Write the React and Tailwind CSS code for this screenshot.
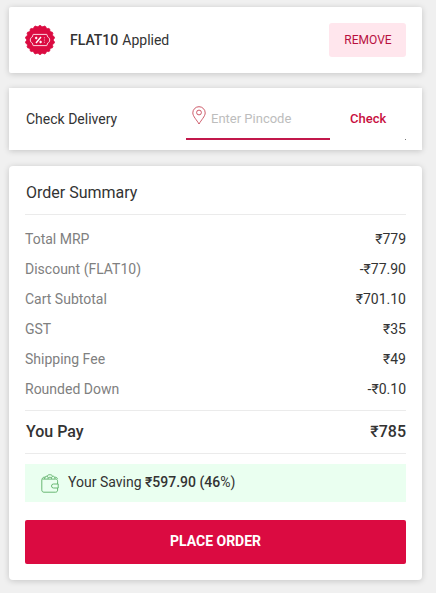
const rows = [
  ["Total MRP", "₹779"],
  ["Discount (FLAT10)", "-₹77.90"],
  ["Cart Subtotal", "₹701.10"],
  ["GST", "₹35"],
  ["Shipping Fee", "₹49"],
  ["Rounded Down", "-₹0.10"],
];

function CouponIcon() {
  const teeth = 18;
  const points = [];
  for (let i = 0; i < teeth * 4; i++) {
    const r = i % 4 < 2 ? 14.6 : 13.5;
    const a = ((i - 0.5) / (teeth * 4)) * Math.PI * 2 - Math.PI / 2;
    points.push(`${(15 + r * Math.cos(a)).toFixed(2)},${(15 + r * Math.sin(a)).toFixed(2)}`);
  }
  return (
    <svg className="h-[30px] w-[30px] shrink-0" viewBox="0 0 30 30" fill="none">
      <polygon points={points.join(" ")} fill="#db0b41" stroke="#db0b41" strokeWidth="0.8" strokeLinejoin="round" />
      <path
        d="M8.2 9.4h13.6l.9 2.5c1.3.5 2 1.700 2 3.100s-.7 2.600-2 3.100l-.9 2.500H8.200l-.9-2.500c-1.300-.5-2-1.700-2-3.100s.7-2.600 2-3.100z"
        stroke="#fbd3df"
        strokeWidth="1"
      />
      <path d="M16 12l-5 6" stroke="#fff" strokeWidth="1.4" />
      <circle cx="11.2" cy="13" r="0.9" fill="#fff" stroke="#fff" strokeWidth="0.7" />
      <circle cx="15.6" cy="17" r="0.9" fill="#fff" stroke="#fff" strokeWidth="0.7" />
      <path d="M19.4 12v6" stroke="#f28cab" strokeWidth="0.9" strokeDasharray="1.5 0.8" />
    </svg>
  );
}

function PinIcon() {
  return (
    <svg className="-mt-[3px] h-[19px] w-[14px] shrink-0" viewBox="0 0 14 19" fill="none" stroke="#c43d4f" strokeWidth="0.85">
      <path d="M7 18C5 14.3.8 10.3.8 6.9a6.2 6.2 0 0 1 12.4 0C13.2 10.3 9 14.3 7 18z" />
      <circle cx="7" cy="6.5" r="2.4" />
    </svg>
  );
}

function WalletIcon() {
  return (
    <svg className="h-[19px] w-[18px] shrink-0" viewBox="0 0 18 19" fill="none" stroke="#62b36d" strokeWidth="0.95">
      <path d="M16.6 10V7.2c0-1.3-.8-2.1-2.1-2.1H3C1.6 5.1.8 4.5.8 5.9v10c0 1.5.8 2.3 2.2 2.3h11.5c1.3 0 2.1-.8 2.1-2.1V14" />
      <path d="M17.2 10h-4.7a2 2 0 0 0 0 4h4.7z" />
      <path d="M1.2 4.9c.2-1.2 1-1.7 2.2-1.7h1M13.5 3.2h.8c1.3 0 2 .7 2.2 2M3.6 5c.1-2 1-3 2.6-2.8C6.6 1.1 7.5.7 8.8.7s2.3.4 2.7 1.5c1.6-.2 2.500.9 2.600 2.800" />
      <path d="M7 5c0-1 .7-1.7 1.8-1.7s1.8.7 1.8 1.7M6.2 2.2l1.1 1.7M11.5 2.2l-1.2 1.7" />
    </svg>
  );
}

const card = "bg-white shadow-[0_1px_6px_rgba(0,0,0,0.18)]";

export default function App() {
  return (
    <main className="flex h-[593px] w-[436px] flex-col bg-[#f0f0f0] pr-[14px] pl-[9px] pt-[7px] font-[Roboto,sans-serif] text-[14px] text-[#333]">
      <section className={`flex h-[66px] shrink-0 items-center rounded-[2px] px-4 ${card}`}>
        <CouponIcon />
        <p className="ml-[15px] leading-5">
          <span className="mr-1 font-medium">FLAT10</span>
          <span>Applied</span>
        </p>
        <button className="ml-auto h-[34px] w-[77px] rounded-[3px] bg-[#ffe6ed] pl-px text-[12px] text-[#b8103f]">REMOVE</button>
      </section>

      <section className={`mt-[15px] flex h-[62px] shrink-0 px-4 ${card}`}>
        <h2 className="w-[161px] self-center pl-px">Check Delivery</h2>
        <div className="mt-2 flex h-11 w-[144px] items-center border-b-2 border-[#c2184b] pl-[6px]">
          <PinIcon />
          <span className="ml-[5px] pt-[3px] text-[13px] text-[#bdbdbd]">Enter Pincode</span>
        </div>
        <button className="ml-5 text-[13px] font-medium text-[#c8103f]">Check</button>
        <span className="mt-[51px] ml-auto h-px w-px bg-[#777]" />
      </section>

      <section className={`mt-4 flex h-[414px] shrink-0 flex-col rounded-[4px] px-4 ${card}`}>
        <h2 className="h-[49px] border-b border-[#ebebeb] pt-[15px] pl-px text-[16px] leading-6">Order Summary</h2>
        <dl className="pt-[9px]">
          {rows.map(([label, value]) => (
            <div key={label} className="flex h-[30px] items-center justify-between">
              <dt className="text-[#808080]">{label}</dt>
              <dd>{value}</dd>
            </div>
          ))}
        </dl>
        <div className="mt-[6px] flex h-11 items-center justify-between border-y border-[#ebebeb] text-[16px] font-medium">
          <span className="pl-px">You Pay</span>
          <span>₹785</span>
        </div>
        <div className="mt-[10px] flex h-[38px] items-center bg-[#eafff0] pl-4">
          <WalletIcon />
          <p className="ml-[9px] pb-[2px]">
            Your Saving <span className="font-medium">₹597.90 (46</span>%)
          </p>
        </div>
        <button className="mt-[18px] h-11 rounded-[2px] bg-[#db0b41] pb-px text-[14px] font-bold text-white">PLACE ORDER</button>
      </section>
    </main>
  );
}
